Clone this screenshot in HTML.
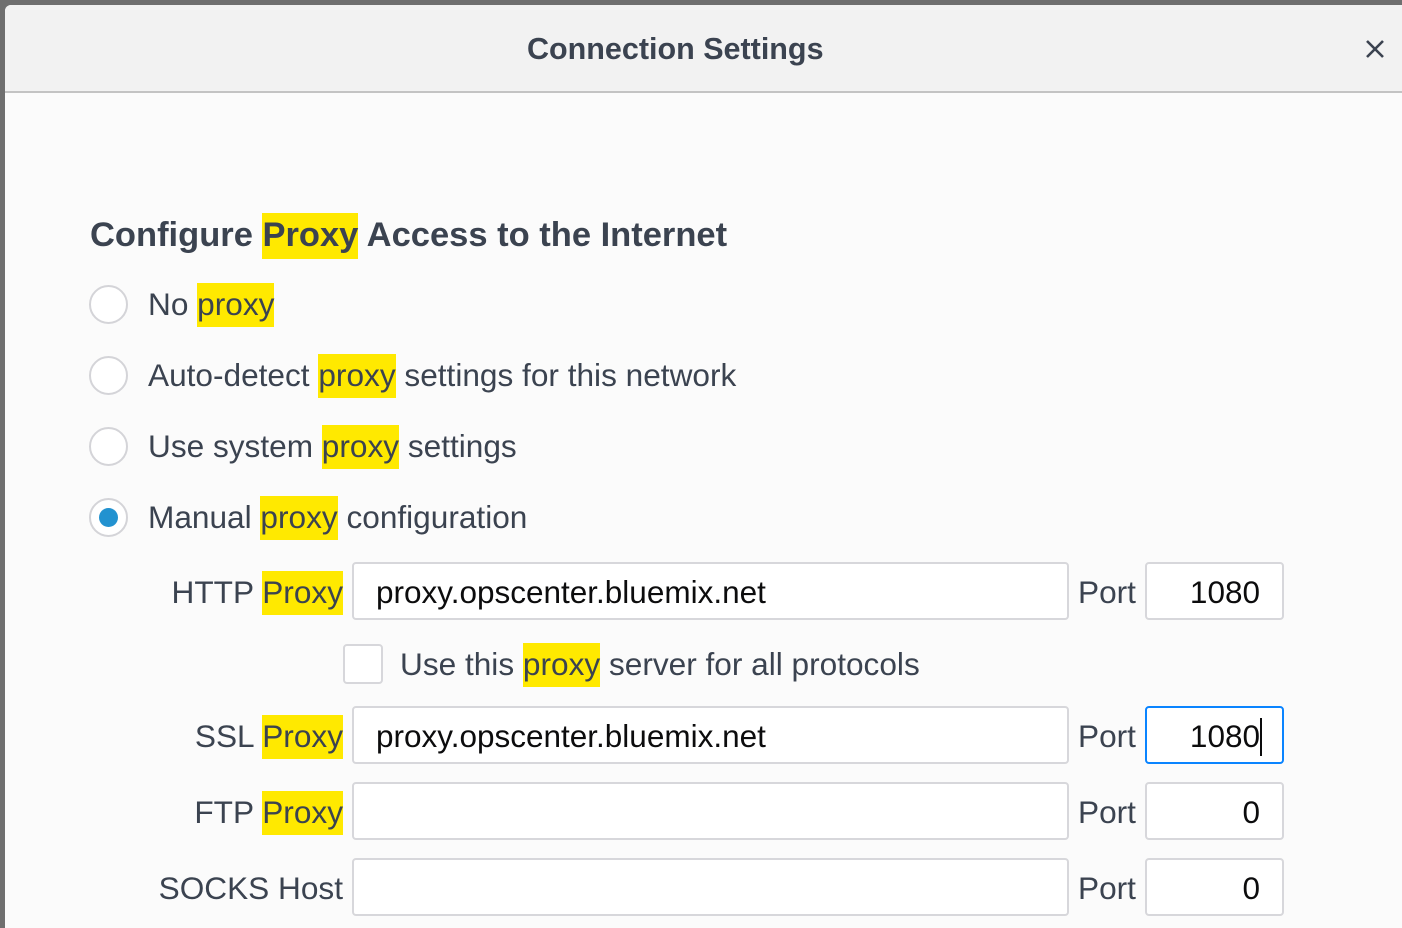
<!DOCTYPE html>
<html><head><style>
*{margin:0;padding:0;box-sizing:border-box}
body{width:1402px;height:928px;background:#6f6f6f;position:relative;overflow:hidden;font-family:"Liberation Sans",sans-serif;color:#3b4350}
.dlg{position:absolute;left:5px;top:5px;width:1397px;height:923px;background:#fbfbfb;border-top-left-radius:6px;overflow:hidden}
.hdr{position:absolute;left:0;top:0;width:100%;height:88px;background:#f2f2f2;border-bottom:2px solid #c3c3c3}
.t{position:absolute;white-space:nowrap;line-height:1}
.hl{background:#ffe900;padding:3px 0 5px}
.l{font-size:31.6px}
.radio{position:absolute;width:39px;height:39px;border-radius:50%;border:2px solid #d4d4d8;background:#fff}
.in{position:absolute;height:58px;background:#fff;border:2px solid #d7d7db;border-radius:4px;font-size:31.5px;color:#0c0c0d;line-height:56px}
</style></head><body>
<div class="dlg">
<div class="hdr"></div>
<div class="t" style="left:522px;top:29px;font-size:30.5px;font-weight:bold;color:#3b4350">Connection Settings</div>
<svg style="position:absolute;left:1360px;top:34px" width="20" height="20"><path d="M2 2L18 18M18 2L2 18" stroke="#3b4350" stroke-width="2.6"/></svg>

<div class="t" style="left:85px;top:213px;font-size:34.5px;font-weight:bold">Configure <span class="hl">Proxy</span> Access to the Internet</div>

<div class="radio" style="left:84px;top:280px"></div>
<div class="t l" style="left:143px;top:284px">No <span class="hl">proxy</span></div>
<div class="radio" style="left:84px;top:351px"></div>
<div class="t l" style="left:143px;top:355px">Auto-detect <span class="hl">proxy</span> settings for this network</div>
<div class="radio" style="left:84px;top:422px"></div>
<div class="t l" style="left:143px;top:426px">Use system <span class="hl">proxy</span> settings</div>
<div class="radio" style="left:84px;top:493px"><div style="position:absolute;left:8px;top:8px;width:19px;height:19px;border-radius:50%;background:#2292d0"></div></div>
<div class="t l" style="left:143px;top:497px">Manual <span class="hl">proxy</span> configuration</div>

<div class="t l" style="right:1059px;top:572px">HTTP <span class="hl">Proxy</span></div>
<div class="in" style="left:347px;top:557px;width:717px;padding-left:22px">proxy.opscenter.bluemix.net</div>
<div class="t l" style="left:1073px;top:572px">Port</div>
<div class="in" style="left:1140px;top:557px;width:139px;text-align:right;padding-right:22px">1080</div>

<div style="position:absolute;left:338px;top:639px;width:40px;height:40px;border:2px solid #d7d7db;border-radius:4px;background:#fff"></div>
<div class="t l" style="left:395px;top:644px">Use this <span class="hl">proxy</span> server for all protocols</div>

<div class="t l" style="right:1059px;top:716px">SSL <span class="hl">Proxy</span></div>
<div class="in" style="left:347px;top:701px;width:717px;padding-left:22px">proxy.opscenter.bluemix.net</div>
<div class="t l" style="left:1073px;top:716px">Port</div>
<div class="in" style="left:1140px;top:701px;width:139px;text-align:right;padding-right:22px;border-color:#0a84ff">1080<span style="position:absolute;left:113px;top:10px;width:2px;height:38px;background:#0c0c0d"></span></div>

<div class="t l" style="right:1059px;top:792px">FTP <span class="hl">Proxy</span></div>
<div class="in" style="left:347px;top:777px;width:717px"></div>
<div class="t l" style="left:1073px;top:792px">Port</div>
<div class="in" style="left:1140px;top:777px;width:139px;text-align:right;padding-right:22px">0</div>

<div class="t l" style="right:1059px;top:868px">SOCKS Host</div>
<div class="in" style="left:347px;top:853px;width:717px"></div>
<div class="t l" style="left:1073px;top:868px">Port</div>
<div class="in" style="left:1140px;top:853px;width:139px;text-align:right;padding-right:22px">0</div>
</div>
</body></html>
